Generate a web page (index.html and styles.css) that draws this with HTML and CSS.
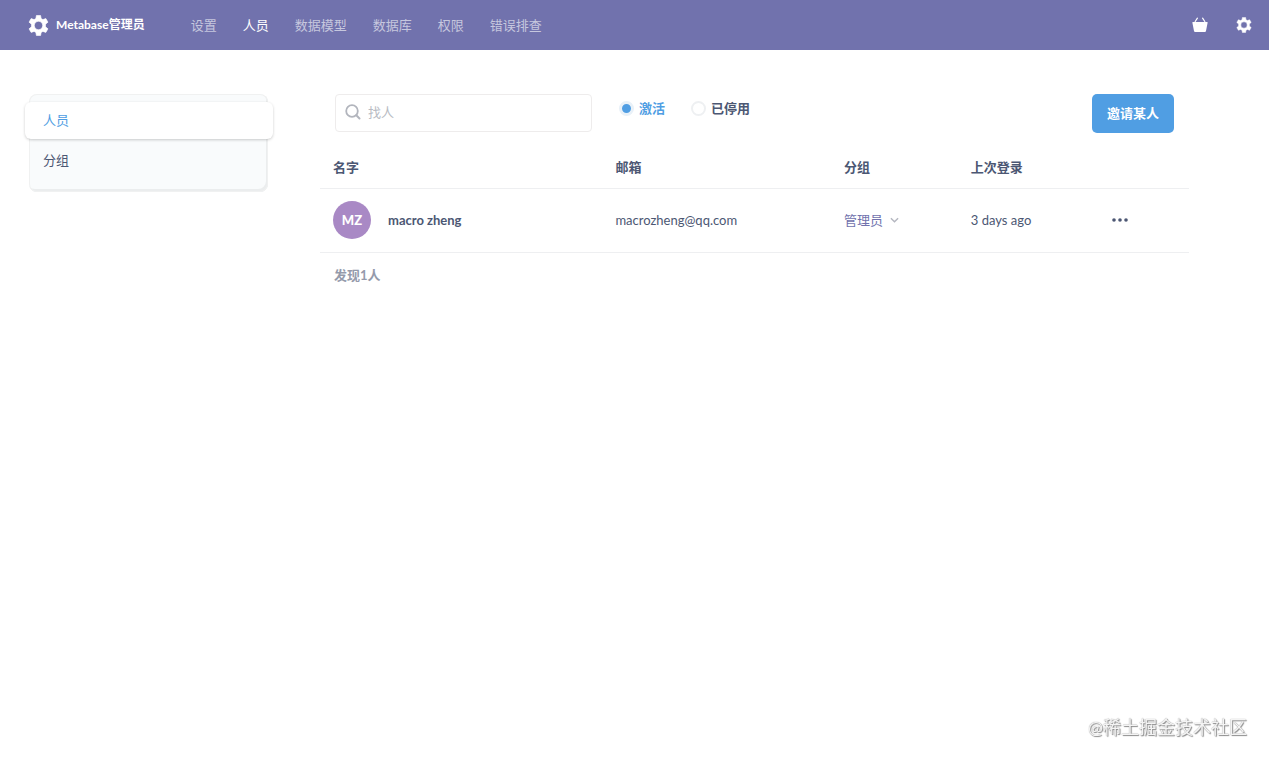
FILE: index.html
```html
<!DOCTYPE html>
<html lang="zh-CN">
<head>
<meta charset="utf-8">
<meta name="viewport" content="width=device-width, initial-scale=1">
<title>人员 · Metabase管理员</title>
<link rel="stylesheet" href="styles.css">
</head>
<body>
<svg class="sprite" aria-hidden="true">
  <symbol id="gear" viewBox="0 0 20 20">
    <path fill="currentColor" fill-rule="evenodd" stroke="currentColor" stroke-width=".6" stroke-linejoin="round" d="M8 .5h4l.5 2.900 1.700 1 2.800-1 2 3.400-2.300 1.900v2.600l2.300 1.900-2 3.400-2.800-1-1.700 1-.5 2.900H8l-.5-2.900-1.700-1-2.800 1-2-3.400 2.300-1.900V8.700L1 6.800l2-3.400 2.800 1 1.700-1zM10 6a4 4 0 1 0 0 8 4 4 0 0 0 0-8z"/>
  </symbol>
</svg>
<header class="topbar">
  <a class="brand" href="#">
    <svg class="brand-icon"><use href="#gear"/></svg>
    <span>Metabase管理员</span>
  </a>
  <nav class="nav">
    <a class="nav-link" href="#">设置</a>
    <a class="nav-link nav-link-active" href="#" aria-current="page">人员</a>
    <a class="nav-link" href="#">数据模型</a>
    <a class="nav-link" href="#">数据库</a>
    <a class="nav-link" href="#">权限</a>
    <a class="nav-link" href="#">错误排查</a>
  </nav>
  <div class="tools">
    <a class="tool" href="#" aria-label="商店">
      <svg class="tool-icon" viewBox="0 0 16 16"><path d="M1 5h14a.6.6 0 0 1 .6.800L14 14a1.200 1.200 0 0 1-1.200 1H3.200A1.200 1.200 0 0 1 2 14L.4 5.800A.6.6 0 0 1 1 5z" fill="currentColor"/><path d="M3.200 4.500 5.400 1.200M12.800 4.500l-2.200-3.300" fill="none" stroke="currentColor" stroke-width="1.200" stroke-linecap="round"/></svg>
    </a>
    <button class="tool" type="button" aria-label="设置菜单">
      <svg class="tool-icon"><use href="#gear"/></svg>
    </button>
  </div>
</header>

<div class="page">
  <aside class="sidebar">
    <a class="side-link side-link-active" href="#" aria-current="page">人员</a>
    <a class="side-link" href="#">分组</a>
  </aside>
  <main class="content">
    <div class="filters">
      <label class="search">
        <svg class="search-icon" viewBox="0 0 16 16" aria-hidden="true"><circle cx="7" cy="7" r="5.800" fill="none" stroke="currentColor" stroke-width="1.800"/><path d="m11.300 11.300 3.200 3.200" stroke="currentColor" stroke-width="2" stroke-linecap="round"/></svg>
        <input class="search-input" type="text" placeholder="找人" aria-label="找人">
      </label>
      <div class="status" role="radiogroup" aria-label="状态">
        <label class="option"><input class="radio" type="radio" name="status" checked><span class="option-text">激活</span></label>
        <label class="option"><input class="radio" type="radio" name="status"><span class="option-text">已停用</span></label>
      </div>
      <button class="invite" type="button">邀请某人</button>
    </div>
    <table class="people">
      <colgroup><col class="col-name"><col class="col-mail"><col class="col-group"><col class="col-login"><col class="col-menu"></colgroup>
      <thead>
        <tr><th>名字</th><th>邮箱</th><th>分组</th><th>上次登录</th><th></th></tr>
      </thead>
      <tbody>
        <tr>
          <td><div class="person"><span class="avatar">MZ</span><span class="person-name">macro zheng</span></div></td>
          <td>macrozheng@qq.com</td>
          <td>
            <label class="group">
              <select class="group-select" aria-label="分组"><option>管理员</option></select>
              <svg class="chevron" viewBox="0 0 10 6" aria-hidden="true"><path d="m1 1 4 4 4-4" fill="none" stroke="currentColor" stroke-width="1.600"/></svg>
            </label>
          </td>
          <td>3 days ago</td>
          <td>
            <button class="more" type="button" aria-label="更多">
              <svg class="more-icon" viewBox="0 0 16 4"><g fill="currentColor"><circle cx="2" cy="2" r="1.800"/><circle cx="8" cy="2" r="1.800"/><circle cx="14" cy="2" r="1.800"/></g></svg>
            </button>
          </td>
        </tr>
      </tbody>
    </table>
    <p class="count">发现1人</p>
  </main>
</div>
<div class="watermark">@稀土掘金技术社区</div>
</body>
</html>
```
FILE: styles.css
```css
*, *::before, *::after { box-sizing: border-box; }

body {
  margin: 0;
  min-height: 100vh;
  background: #fff;
  color: #4c5773;
  font: 13px/20px Lato, "Noto Sans CJK SC", sans-serif;
}

a { color: inherit; text-decoration: none; }
button, input, select { font: inherit; color: inherit; }
button { border: 0; background: none; padding: 0; cursor: pointer; }
svg { display: block; }
.sprite { position: absolute; width: 0; height: 0; }

.topbar {
  display: flex;
  align-items: center;
  height: 50px;
  padding: 0 17px 0 28px;
  background: #7172ad;
  color: #fff;
}
.brand {
  display: flex;
  align-items: center;
  gap: 7px;
  font-size: 12px;
  font-weight: 700;
}
.brand-icon { width: 21px; height: 21px; }
.nav { display: flex; gap: 26px; margin-left: 46px; }
.nav-link { color: #c6c7de; }
.nav-link-active { color: #fff; }
.tools { display: flex; gap: 28px; margin-left: auto; }
.tool-icon { width: 16px; height: 16px; }

.page {
  display: flex;
  align-items: flex-start;
  gap: 52px;
  padding: 44px 80px 24px 29px;
}
.sidebar {
  flex: 0 0 239px;
  padding: 8px 0 12px;
  border-radius: 8px;
  background: #f9fbfc;
  box-shadow: inset 0 0 0 1px #f0f1f1, inset -2px -3px 0 #ebedee;
}
.side-link { display: block; padding: 11px 14px 10px; }
.side-link-active {
  margin: 0 -5px 0 -4px;
  padding: 8px 18px 9px;
  border-radius: 6px;
  background: #fff;
  box-shadow: 0 1px 3px rgba(0, 0, 0, .2);
  color: #509ee3;
}

.content { flex: 1; min-width: 0; }
.filters { display: flex; align-items: flex-start; padding: 0 15px; }
.search {
  display: flex;
  align-items: center;
  gap: 7px;
  width: 257px;
  height: 38px;
  padding: 0 10px 2px 9px;
  border: 1px solid #eeecec;
  border-radius: 4px;
}
.search-icon { flex: none; width: 16px; height: 16px; color: #b2b5bd; }
.search-input {
  flex: 1;
  min-width: 0;
  padding: 0;
  border: 0;
  outline: 0;
  background: none;
}
.search-input::placeholder { color: #b8bbc3; opacity: 1; }
.status { display: flex; gap: 26px; margin-left: 27px; padding-top: 4px; }
.option { display: flex; align-items: center; gap: 5px; font-weight: 700; }
.radio {
  appearance: none;
  width: 15px;
  height: 15px;
  margin: 0;
  border: 2px solid #eef0f2;
  border-radius: 50%;
  background: #fff;
}
.radio:checked { border: 3px solid #e9f1f8; background: #509ee3; }
.radio:checked + .option-text { color: #509ee3; }
.invite {
  margin-left: auto;
  padding: 9px 15px 10px;
  border-radius: 5px;
  background: #509ee3;
  color: #fff;
  font-weight: 700;
}

.people {
  width: 100%;
  margin-top: 12px;
  border-collapse: collapse;
  table-layout: fixed;
  text-align: left;
}
.col-name { width: 32.5%; }
.col-mail { width: 26.3%; }
.col-group { width: 14.6%; }
.col-login { width: 16.3%; }
.people th { padding: 12px 13px 11px; border-bottom: 1px solid #eeeff1; }
.people td { padding: 12px 13px 13px; border-bottom: 1px solid #eeeff1; }
.person { display: flex; align-items: center; gap: 17px; }
.avatar {
  display: grid;
  place-items: center;
  width: 38px;
  height: 38px;
  border-radius: 50%;
  background: #a989c5;
  color: #fff;
  font-weight: 900;
}
.person-name { font-weight: 700; }
.group { display: inline-flex; align-items: center; gap: 6px; color: #7172ad; }
.group-select {
  appearance: none;
  padding: 0;
  border: 0;
  background: none;
}
.chevron { width: 9px; height: 6px; color: #b5b7c0; }
.more { display: block; }
.more-icon { width: 16px; height: 4px; }
.count { margin: 12px 14px; color: #949aab; font-weight: 700; }

.watermark {
  position: fixed;
  right: 22px;
  bottom: 18px;
  color: #f4f4f4;
  font-size: 18px;
  line-height: 28px;
  text-shadow: 1px 1px 1px #888, 0 0 1px #888;
}
```
